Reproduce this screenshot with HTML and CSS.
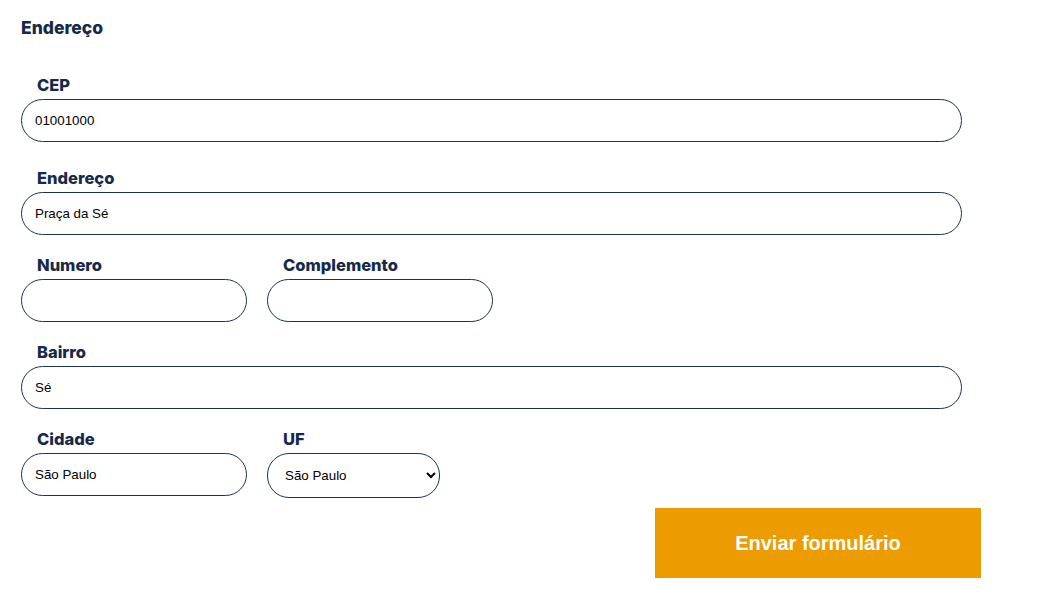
FILE: index.html
```html
<!DOCTYPE html>
<html lang="pt-BR">
<head>
<meta charset="utf-8">
<title>Endereço</title>
<link rel="stylesheet" href="styles.css">
</head>
<body>
<form class="form">
  <h2 class="title">Endereço</h2>
  <div class="group group-first">
    <label class="label" for="cep">CEP</label>
    <input class="input input-full" id="cep" type="text" value="01001000">
  </div>
  <div class="group group-second">
    <label class="label" for="end">Endereço</label>
    <input class="input input-full" id="end" type="text" value="Praça da Sé">
  </div>
  <div class="group row">
    <div class="field">
      <label class="label" for="num">Numero</label>
      <input class="input input-half" id="num" type="text" value="">
    </div>
    <div class="field">
      <label class="label" for="comp">Complemento</label>
      <input class="input input-half" id="comp" type="text" value="">
    </div>
  </div>
  <div class="group">
    <label class="label" for="bairro">Bairro</label>
    <input class="input input-full" id="bairro" type="text" value="Sé">
  </div>
  <div class="group row">
    <div class="field">
      <label class="label" for="cidade">Cidade</label>
      <input class="input input-half" id="cidade" type="text" value="São Paulo">
    </div>
    <div class="field">
      <label class="label" for="uf">UF</label>
      <select class="select" id="uf">
        <option>São Paulo</option>
      </select>
    </div>
  </div>
  <div class="actions">
    <button class="button" type="button">Enviar formulário</button>
  </div>
</form>
</body>
</html>
```
FILE: styles.css
```css
html, body {
  margin: 0;
  padding: 0;
  background: #ffffff;
}

.form {
  width: 960px;
  margin: 0 0 0 21px;
  padding-top: 16px;
}

.title {
  margin: 0;
  font-family: Inter, "Open Sans", sans-serif;
  font-weight: 800;
  font-size: 17.5px;
  line-height: 24px;
  color: #15294a;
}

.group {
  margin-top: 20px;
}

.group-first {
  margin-top: 35px;
}

.group-second {
  margin-top: 26px;
}

.row {
  display: flex;
  gap: 20px;
}

.label {
  display: block;
  margin: 0 0 4px 16px;
  font-family: Inter, "Open Sans", sans-serif;
  font-weight: 800;
  font-size: 16.5px;
  line-height: 20px;
  color: #15294a;
}

.input {
  display: block;
  box-sizing: border-box;
  height: 43px;
  padding: 0 13px;
  border: 1px solid #1a3355;
  border-radius: 22px;
  font-family: "Liberation Sans", Arial, sans-serif;
  font-size: 13.33px;
  color: #000;
  background: #fff;
  outline: none;
}

.input-full {
  width: 941px;
}

.input-half {
  width: 226px;
}

.select {
  display: block;
  box-sizing: border-box;
  width: 173px;
  height: 45px;
  padding: 0 4px 0 13px;
  border: 1px solid #1a3355;
  border-radius: 22px;
  font-family: "Liberation Sans", Arial, sans-serif;
  font-size: 13.33px;
  color: #000;
  background: #fff;
}

.actions {
  display: flex;
  justify-content: flex-end;
  margin-top: 10px;
}

.button {
  width: 326px;
  height: 70px;
  border: none;
  border-radius: 0;
  background: #ec9b00;
  color: #fff;
  font-family: "Liberation Sans", Arial, sans-serif;
  font-weight: 700;
  font-size: 20px;
  cursor: pointer;
}
```
